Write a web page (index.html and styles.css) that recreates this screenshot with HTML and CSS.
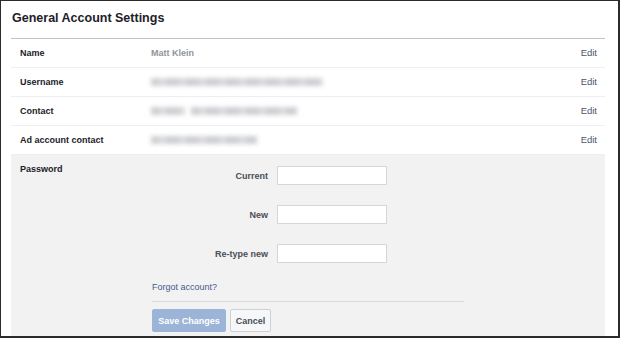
FILE: index.html
```html
<!DOCTYPE html>
<html lang="en">
<head>
    <meta charset="UTF-8">
    <title>General Account Settings</title>
    <link rel="stylesheet" href="styles.css">
</head>
<body>
    <div class="frame">
        <h1 class="title">General Account Settings</h1>
        <div class="settings">
            <div class="row">
                <div class="label">Name</div>
                <div class="value name">Matt Klein</div>
                <a class="edit" href="#">Edit</a>
            </div>
            <div class="row">
                <div class="label">Username</div>
                <div class="value">
                    <span class="blur" style="width: 172px"></span>
                </div>
                <a class="edit" href="#">Edit</a>
            </div>
            <div class="row">
                <div class="label">Contact</div>
                <div class="value">
                    <span class="blur" style="width: 34px"></span>
                    <span class="blur" style="width: 106px"></span>
                </div>
                <a class="edit" href="#">Edit</a>
            </div>
            <div class="row">
                <div class="label">Ad account contact</div>
                <div class="value">
                    <span class="blur" style="width: 106px"></span>
                </div>
                <a class="edit" href="#">Edit</a>
            </div>

            <!-- Passwort -->
            <div class="password">
                <div class="label">Password</div>
                <div class="pw-form">
                    <div class="fields">
                        <label for="pwCurrent">Current</label>
                        <input id="pwCurrent" type="password">
                        <label for="pwNew">New</label>
                        <input id="pwNew" type="password">
                        <label for="pwRetype">Re-type new</label>
                        <input id="pwRetype" type="password">
                    </div>
                    <div class="forgot-line">
                        <a class="forgot" href="#">Forgot account?</a>
                    </div>
                    <div class="actions">
                        <button class="save">Save Changes</button>
                        <button class="cancel">Cancel</button>
                    </div>
                </div>
            </div>
        </div>
    </div>
</body>
</html>
```

FILE: styles.css
```css
* {
    box-sizing: border-box;
}
body {
    margin: 0;
    font-family: 'Liberation Sans', Arial, sans-serif;
    color: #1d2129;
    background: #fff;
}
.frame {
    width: 620px;
    height: 338px;
    border: 1px solid #2b2b2b;
    border-right-width: 2px;
    border-bottom-width: 2px;
    padding: 0 13px 0 10px;
    overflow: hidden;
}
.title {
    margin: 0;
    padding: 9px 0 12px 1px;
    font-size: 12.5px;
    line-height: 16px;
    font-weight: bold;
    color: #1d2129;
}
.settings {
    border-top: 1px solid #bfc2c8;
}
.row {
    display: flex;
    align-items: center;
    height: 29px;
    padding: 0 8px 1px 9px;
    border-bottom: 1px solid #eceef1;
    font-size: 9px;
    line-height: 12px;
}
.label {
    width: 131px;
    flex-shrink: 0;
    font-size: 9px;
    font-weight: bold;
    color: #1d2129;
}
.value {
    flex: 1;
    display: flex;
    gap: 6px;
}
.name {
    font-weight: bold;
    color: #90949c;
}
.blur {
    display: inline-block;
    height: 8px;
    background: repeating-linear-gradient(to right, #cfd0d4 0, #cfd0d4 9px, #e0e1e3 9px, #d6d7da 14px, #c9cace 20px);
    filter: blur(2px);
}
.edit {
    color: #4b5569;
    text-decoration: none;
    font-size: 9.5px;
}
.password {
    display: flex;
    background: #f2f2f2;
    padding: 8px 8px 0 9px;
    height: 182px;
}
.password .label {
    width: 132px;
    line-height: 12px;
}
.pw-form {
    padding-top: 3px;
    width: 312px;
}
.fields {
    display: grid;
    grid-template-columns: 116px 110px;
    grid-auto-rows: 19px;
    column-gap: 9px;
    row-gap: 20px;
    align-items: center;
}
.fields label {
    text-align: right;
    font-size: 9px;
    font-weight: bold;
    color: #4b4f56;
}
.fields input {
    width: 110px;
    height: 19px;
    margin: 0;
    border: 1px solid #d4d6da;
    background: #fff;
}
.forgot-line {
    margin-top: 16px;
    padding-bottom: 8px;
    border-bottom: 1px solid #d9dadc;
    line-height: 12px;
}
.forgot {
    color: #4b5a8f;
    text-decoration: none;
    font-size: 9px;
}
.actions {
    display: flex;
    gap: 4px;
    margin-top: 7px;
}
.actions button {
    height: 23px;
    padding: 0;
    font-family: inherit;
    font-size: 9px;
    font-weight: bold;
    white-space: nowrap;
    border-radius: 2px;
    cursor: pointer;
}
.save {
    width: 74px;
    background: #9cb4d8;
    border: 1px solid #9cb4d8;
    color: #fff;
}
.cancel {
    width: 41px;
    background: #f6f7f9;
    border: 1px solid #ced0d4;
    color: #4b4f56;
}
```
